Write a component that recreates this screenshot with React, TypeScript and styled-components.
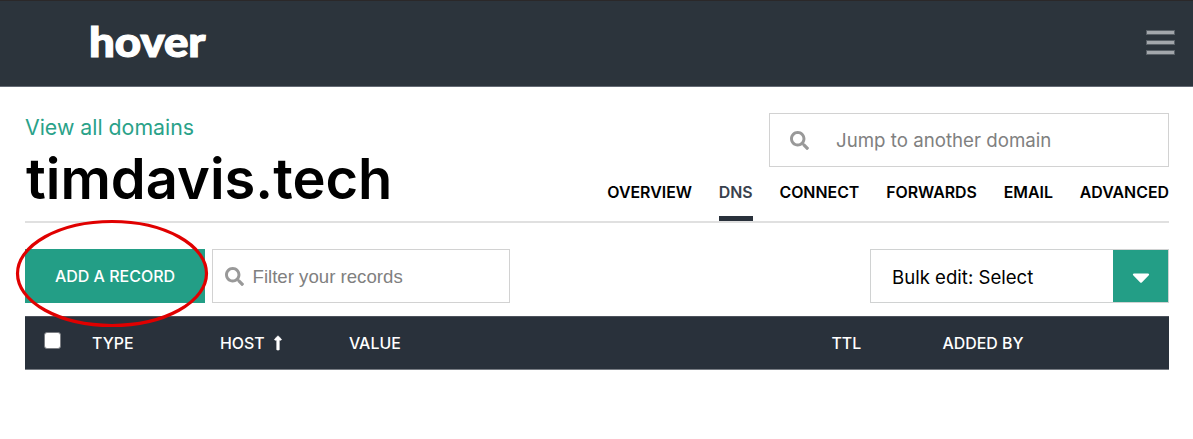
import React from "react";
import styled, { createGlobalStyle } from "styled-components";
import { FaSearch, FaCaretDown, FaLongArrowAltUp } from "react-icons/fa";

const GlobalStyle = createGlobalStyle`
  * { box-sizing: border-box; }
  body {
    margin: 0;
    background: #fff;
    color: #000;
    font-family: Inter, "Liberation Sans", sans-serif;
    overflow: hidden;
  }
`;

const Header = styled.header`
  height: 87px;
  display: flex;
  align-items: flex-start;
  justify-content: space-between;
  padding: 11px 18px 0 85px;
  background: #2c343c;
  border-top: 1px solid #2b2829;
  border-bottom: 1px solid #646a74;
`;

const Logo = styled.svg`
  display: block;
  width: 128px;
  height: 62px;
  overflow: visible;
  fill: #fff;
  stroke: #fff;
  font-family: Lato, sans-serif;
  font-weight: 900;
`;

const MenuButton = styled.button`
  display: flex;
  flex-direction: column;
  gap: 5px;
  width: 29px;
  margin-top: 18px;
  padding: 0;
  border: 0;
  background: none;
`;

const MenuLine = styled.span`
  height: 5px;
  background: #a3a7ac;
  border: 1px solid #5a6168;
`;

const Page = styled.main`
  padding: 26px 24px 0 25px;
`;

const DomainHeader = styled.section`
  display: flex;
  justify-content: space-between;
  height: 110px;
  border-bottom: 2px solid #e0e0e0;
`;

const DomainTitle = styled.div`
  display: flex;
  flex-direction: column;
`;

const BackLink = styled.a`
  height: 29px;
  line-height: 28px;
  font-size: 21.3px;
  color: #2aa289;
`;

const DomainName = styled.h1`
  margin: 4px 0 0 1px;
  font-size: 56px;
  line-height: 66px;
  font-weight: 600;
`;

const DomainTools = styled.div`
  display: flex;
  flex-direction: column;
  align-items: flex-end;
  justify-content: space-between;
`;

const SearchField = styled.label<{ $width: number; $pad: number; $gap: number }>`
  display: flex;
  align-items: center;
  gap: ${(p) => p.$gap}px;
  width: ${(p) => p.$width}px;
  height: 54px;
  padding-left: ${(p) => p.$pad}px;
  border: 1px solid #d2d2d2;
  color: #999;
  svg { flex: none; }
`;

const SearchText = styled.span<{ $font?: string; $size: number }>`
  font-family: ${(p) => p.$font ?? "Inter"}, sans-serif;
  font-size: ${(p) => p.$size}px;
  padding-top: ${(p) => (p.$font ? 2 : 0)}px;
  color: #808080;
  white-space: nowrap;
`;

const Tabs = styled.nav`
  display: flex;
  gap: 26.8px;
`;

const Tab = styled.a<{ $active?: boolean }>`
  height: 40px;
  line-height: 23px;
  font-size: 15.9px;
  font-weight: 600;
  color: ${(p) => (p.$active ? "#39414d" : "#000")};
  border-bottom: 5px solid ${(p) => (p.$active ? "#29313b" : "transparent")};
`;

const Toolbar = styled.section`
  display: flex;
  margin-top: 26px;
  height: 54px;
`;

const AddButton = styled.button`
  width: 180px;
  height: 54px;
  margin-right: 7px;
  border: 0;
  padding: 1px 0 0;
  background: #239e86;
  color: #fff;
  font: 550 16px/53px Inter, sans-serif;
`;

const BulkSelect = styled.div`
  display: flex;
  align-items: stretch;
  justify-content: space-between;
  width: 299px;
  height: 54px;
  margin-left: auto;
  border: 1px solid #d0d2d2;
  padding-left: 21px;
  font-size: 18.6px;
  line-height: 55px;
`;

const SelectArrow = styled.span`
  display: flex;
  align-items: center;
  justify-content: center;
  width: 55px;
  padding-top: 2px;
  background: #239e86;
  color: #fff;
`;

const TableHeader = styled.div`
  display: grid;
  grid-template-columns: 67px 128px 129px 482.5px 111px 1fr;
  margin-top: 13px;
  height: 54px;
  background: #29313b;
  border-top: 1px solid #4c525b;
  border-bottom: 1px solid #777c83;
  color: #fff;
  font-size: 15.9px;
  font-weight: 550;
`;

const Column = styled.span`
  display: flex;
  align-items: center;
  gap: 5px;
  height: 52px;
`;

const Checkbox = styled.span`
  width: 17px;
  height: 17px;
  margin: -6px 0 0 19px;
  background: #fff;
  border: 1px solid #7b7e83;
  border-radius: 3px;
`;

const Highlight = styled.svg`
  position: absolute;
  left: 14px;
  top: 218px;
  width: 196px;
  height: 112px;
  pointer-events: none;
`;

export default function App() {
  return (
    <>
      <GlobalStyle />
      <Header>
        <Logo viewBox="0 0 128 62" aria-label="hover">
          <text x="4" y="44.5" fontSize="41" strokeWidth="1.2" textLength="116.5" lengthAdjust="spacingAndGlyphs">
            hover
          </text>
        </Logo>
        <MenuButton aria-label="Menu">
          <MenuLine />
          <MenuLine />
          <MenuLine />
        </MenuButton>
      </Header>
      <Page>
        <DomainHeader>
          <DomainTitle>
            <BackLink>View all domains</BackLink>
            <DomainName>timdavis.tech</DomainName>
          </DomainTitle>
          <DomainTools>
            <SearchField $width={400} $pad={20} $gap={27}>
              <FaSearch size={19} />
              <SearchText $size={18.7}>Jump to another domain</SearchText>
            </SearchField>
            <Tabs>
              <Tab>OVERVIEW</Tab>
              <Tab $active>DNS</Tab>
              <Tab>CONNECT</Tab>
              <Tab>FORWARDS</Tab>
              <Tab>EMAIL</Tab>
              <Tab>ADVANCED</Tab>
            </Tabs>
          </DomainTools>
        </DomainHeader>
        <Toolbar>
          <AddButton>ADD A RECORD</AddButton>
          <SearchField $width={298} $pad={11.5} $gap={9}>
            <FaSearch size={19} />
            <SearchText $size={18.65} $font='"Liberation Sans"'>Filter your records</SearchText>
          </SearchField>
          <BulkSelect>
            Bulk edit: Select
            <SelectArrow>
              <FaCaretDown size={28} />
            </SelectArrow>
          </BulkSelect>
        </Toolbar>
        <TableHeader>
          <Column>
            <Checkbox />
          </Column>
          <Column>TYPE</Column>
          <Column>
            HOST <FaLongArrowAltUp size={16} stroke="#fff" strokeWidth={20} />
          </Column>
          <Column>VALUE</Column>
          <Column>TTL</Column>
          <Column>ADDED BY</Column>
        </TableHeader>
      </Page>
      <Highlight viewBox="0 0 196 112">
        <ellipse cx="98" cy="55.5" rx="94.5" ry="52" fill="none" stroke="#e00000" strokeWidth="3.2" />
      </Highlight>
    </>
  );
}
